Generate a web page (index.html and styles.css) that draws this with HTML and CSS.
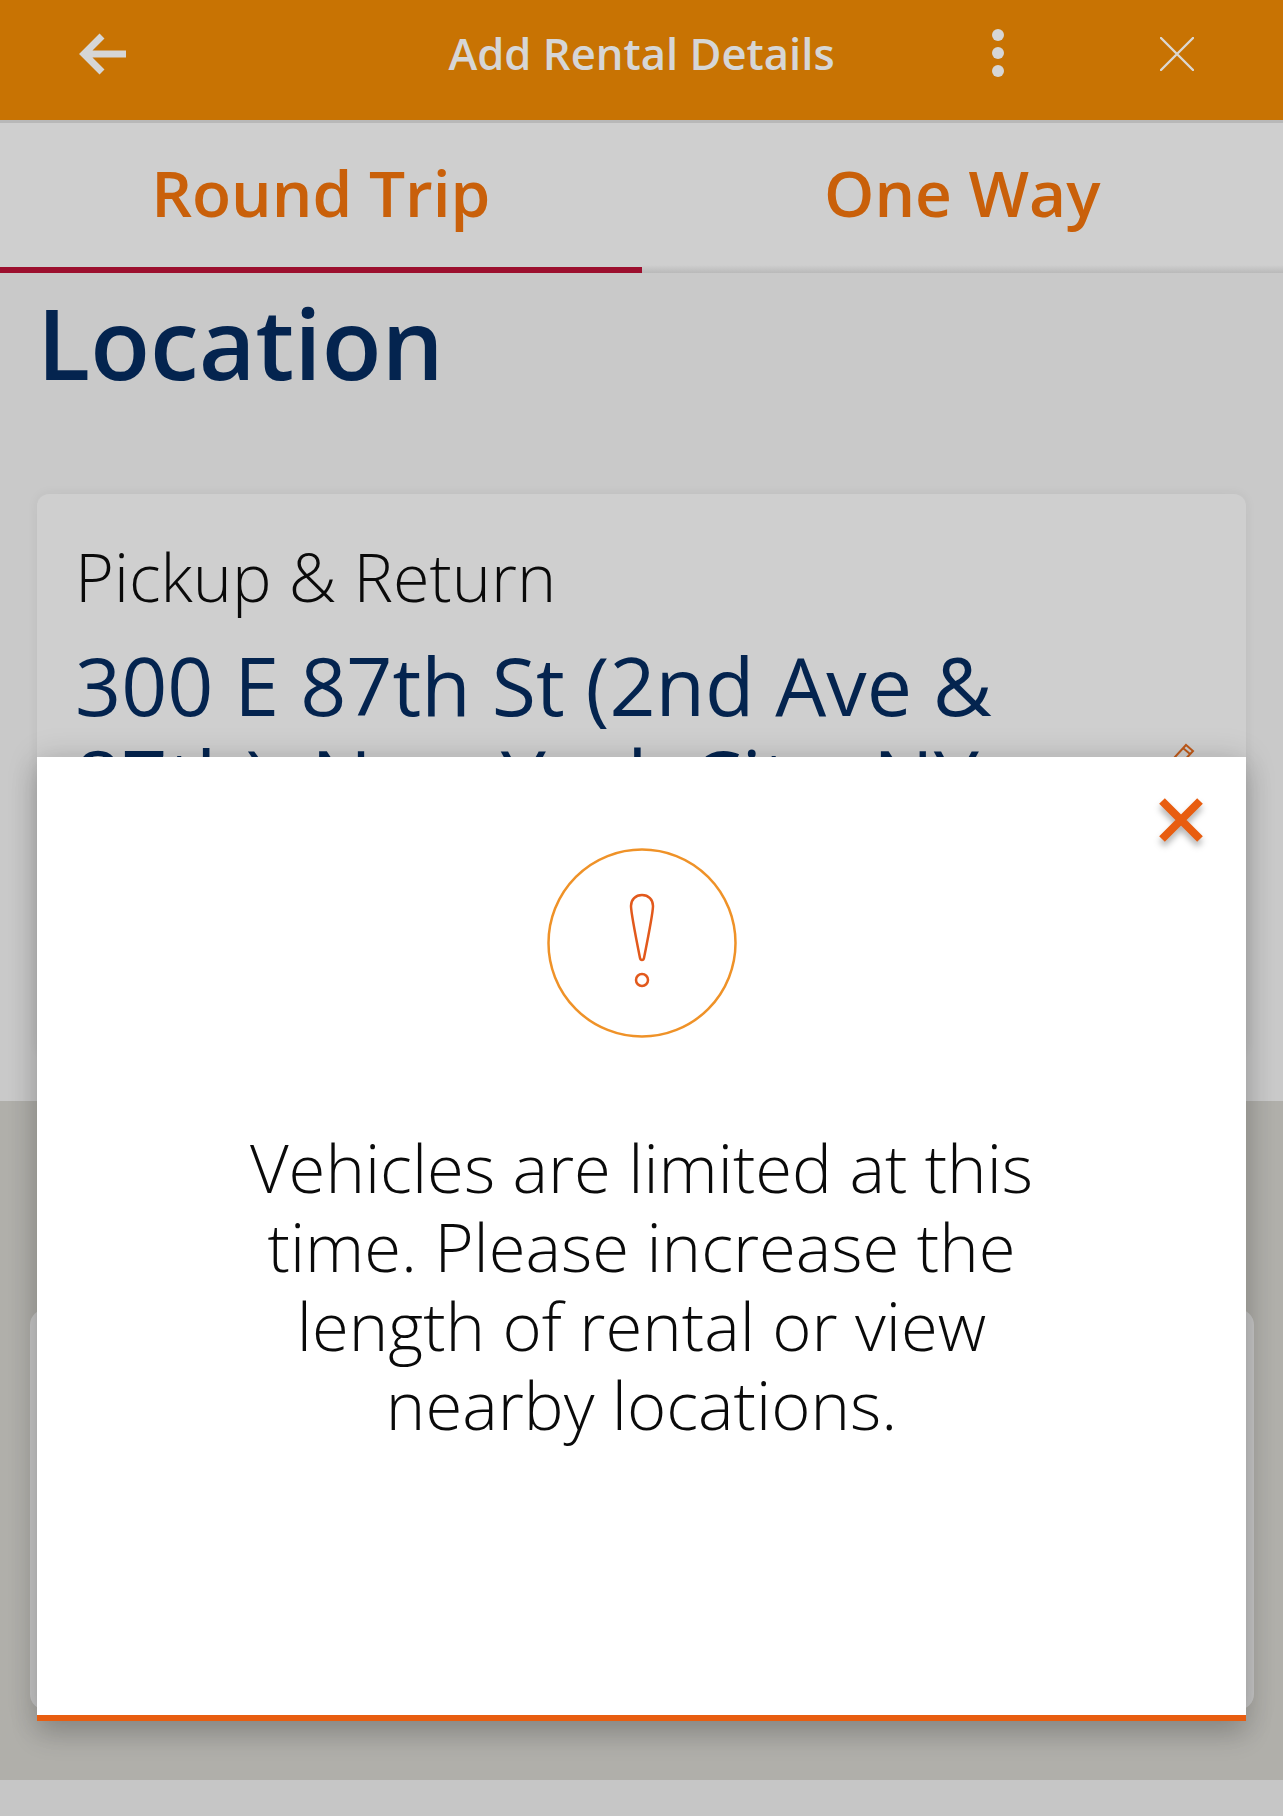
FILE: index.html
```html
<!DOCTYPE html>
<html lang="en">
<head>
<meta charset="utf-8">
<title>Add Rental Details</title>
<link rel="stylesheet" href="styles.css">
</head>
<body>
<div class="page">
  <header class="topbar">
    <svg class="ico-back" width="50" height="44" viewBox="0 0 50 44"><path d="M48 22H6M24 4L6 22l18 18" fill="none" stroke="#d6d6d6" stroke-width="7"/></svg>
    <h1 class="topbar-title">Add Rental Details</h1>
    <svg class="ico-more" width="12" height="48" viewBox="0 0 12 48"><circle cx="6" cy="6" r="6" fill="#d6d6d6"/><circle cx="6" cy="24" r="6" fill="#d6d6d6"/><circle cx="6" cy="42" r="6" fill="#d6d6d6"/></svg>
    <svg class="ico-close" width="34" height="34" viewBox="0 0 34 34"><path d="M1 1l32 32M33 1L1 33" fill="none" stroke="#dcd8d2" stroke-width="2.4" stroke-linecap="round"/></svg>
  </header>
  <nav class="tabs">
    <div class="tab tab-active">Round Trip</div>
    <div class="tab">One Way</div>
  </nav>
  <main class="content">
    <h2 class="section-title">Location</h2>
    <section class="card">
      <div class="card-label">Pickup &amp; Return</div>
      <div class="card-value">300 E 87th St (2nd Ave &amp; 87th), New York City, NY</div>
      <svg class="ico-edit" width="28" height="28" viewBox="0 0 28 28"><path d="M3 27l3-9L18 5l7 6-12 13zM15 8l7 6" fill="none" stroke="#bf5a1a" stroke-width="2"/></svg>
    </section>
  </main>
  <div class="lower">
    <div class="lower-card"></div>
  </div>
  <div class="footer"></div>

  <div class="modal">
    <svg class="modal-x" width="46" height="46" viewBox="0 0 46 46"><path d="M4 4l38 38M42 4L4 42" fill="none" stroke="#e85d10" stroke-width="8"/></svg>
    <svg class="modal-icon" width="190" height="190" viewBox="0 0 190 190"><circle cx="95" cy="95" r="93.500" fill="none" stroke="#ef9228" stroke-width="2.500"/><path d="M95 47c-6.500 0-11 4.500-11 11 0 6 7 42 9 52 .5 2.500 3.500 2.500 4 0 2-10 9-46 9-52 0-6.500-4.500-11-11-11z" fill="none" stroke="#e2591c" stroke-width="2.500"/><circle cx="95" cy="132" r="6" fill="none" stroke="#e2591c" stroke-width="2.500"/></svg>
    <p class="modal-text">Vehicles are limited at this time. Please increase the length of rental or view nearby locations.</p>
  </div>
</div>
</body>
</html>
```
FILE: styles.css
```css
* { box-sizing: border-box; }
html, body { margin: 0; padding: 0; }
body { font-family: "Open Sans", "Lato", sans-serif; background: #c6c6c6; }
.page { position: relative; width: 1283px; height: 1816px; overflow: hidden; display: flex; flex-direction: column; }

.topbar { height: 123px; flex: none; background: #c87303; border-bottom: 3px solid #b8b8b8; position: relative; display: flex; justify-content: center; padding-top: 29px; }
.topbar-title { margin: 0; font-size: 43.6px; line-height: 48px; font-weight: 600; color: #d6d6d6; height: 48px; }
.ico-back { position: absolute; left: 78px; top: 32px; }
.ico-more { position: absolute; left: 992px; top: 29px; }
.ico-close { position: absolute; left: 1160px; top: 37px; }

.tabs { height: 150px; flex: none; display: flex; background: linear-gradient(to top, #b9b9b9, #cfcfcf 8px); }
.tab { flex: 1; font-size: 64px; font-weight: 600; color: #c9600a; text-align: center; line-height: 76px; padding-top: 32px; }
.tab-active { border-bottom: 6px solid #9c0f2e; background: #cfcfcf; }

.content { height: 828px; flex: none; background: #c9c9c9; padding: 0 37px; overflow: hidden; }
.section-title { margin: 0; font-size: 98px; line-height: 100px; font-weight: 600; color: #04244f; padding-top: 19px; height: 221px; }
.card { position: relative; background: #cfcfcf; border-radius: 12px; height: 560px; padding: 40px 38px; box-shadow: 0 0 12px rgba(0,0,0,.06); }
.card-label { font-size: 66.500px; line-height: 74px; color: #0a0a0a; font-weight: 300; padding-top: 5px; }
.card-value { font-size: 80.700px; line-height: 93px; color: #04244f; margin-top: 26px; width: 1000px; }
.ico-edit { position: absolute; right: 50px; top: 246px; }

.lower { height: 679px; flex: none; background: #b0afaa; padding: 208px 29px 0 30px; }
.lower-card { height: 401px; background: #c8c8c8; border-radius: 16px; }
.footer { flex: 1; background: #c6c6c6; position: relative; z-index: 1; }

.modal { position: absolute; z-index: 2; left: 37px; top: 757px; width: 1209px; height: 964px; background: #fff; border-bottom: 6px solid #e85d10; box-shadow: 0 14px 26px rgba(0,0,0,.16), 0 0 30px rgba(0,0,0,.14); display: flex; flex-direction: column; align-items: center; padding-top: 91px; }
.modal-x { position: absolute; right: 42px; top: 40px; filter: drop-shadow(0 5px 3px rgba(0,0,0,.3)); }
.modal-text { margin: 90px 0 0; width: 820px; text-align: center; font-size: 67px; line-height: 79px; font-weight: 300; color: #0a0a0a; }
```
